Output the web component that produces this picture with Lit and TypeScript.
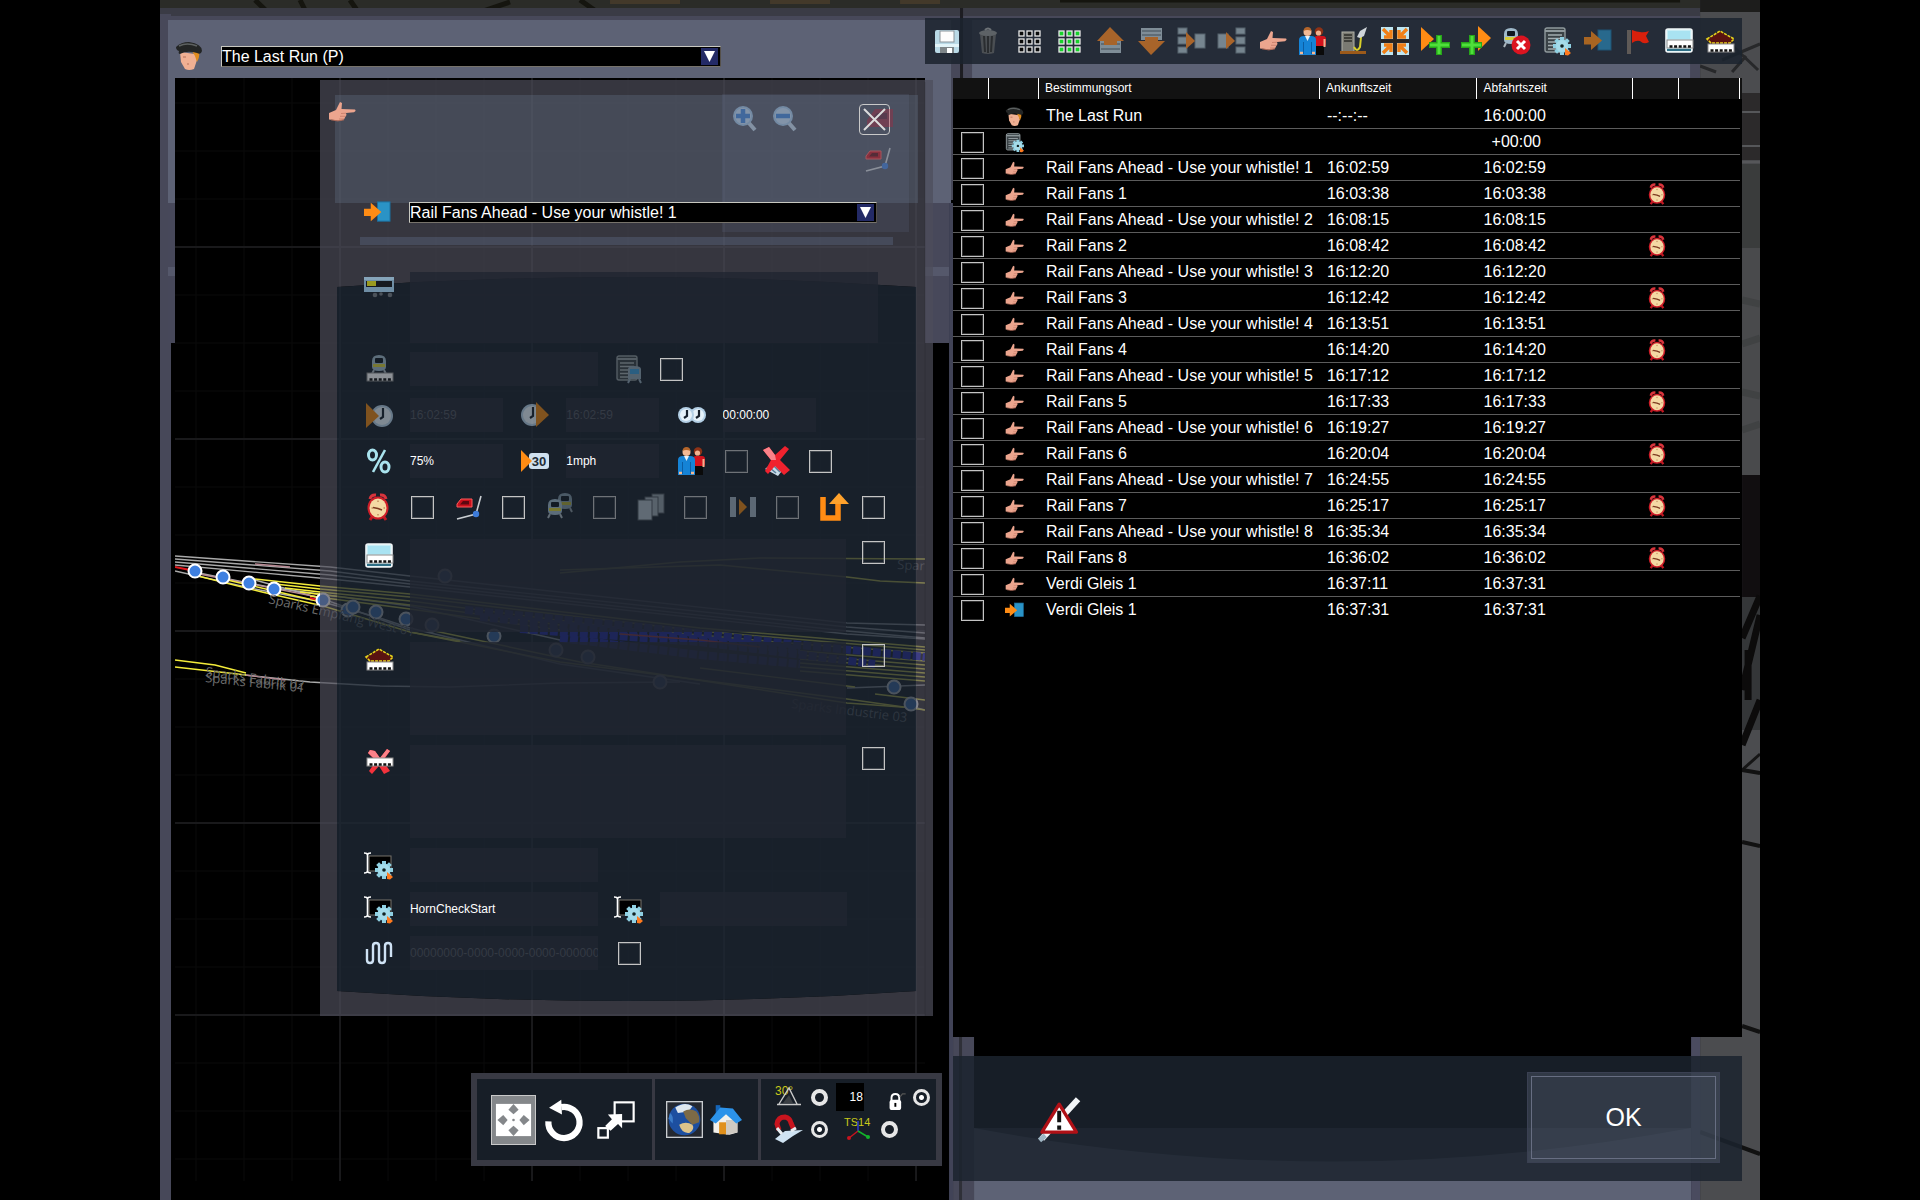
import { LitElement, html, svg, css, nothing, TemplateResult, SVGTemplateResult } from "lit";
import { customElement, property } from "lit/decorators.js";

/* ---------- icon drawings, all on a 28 x 28 grid ---------- */

const gear = svg`
  <g transform="translate(19 19)">
    <g fill="#8fd0e2">
      ${[0, 45, 90, 135].map((a) => svg`<rect x="-2" y="-9" width="4" height="18" transform="rotate(${a})"/>`)}
      <circle r="6.6"/>
    </g>
    <circle r="6" fill="#a5dcea"/>
    <circle r="1.8" fill="#122"/>
    <path d="M3 2 L9 7 L6 9.500 L3 9 Z" fill="#ff7a1e"/>
  </g>`;

const clockFace = (x: number, y: number, r: number) => svg`
  <circle cx=${x} cy=${y} r=${r} fill="#b4d0e6"/>
  <circle cx=${x} cy=${y} r=${r - 2} fill="#e6f2fa"/>
  <path d="M${x + 1} ${y - r + 3} V${y + 1} L${x - 2} ${y + 3}" stroke="#16202c" stroke-width="2.200" fill="none"/>`;

const platform = (y: number) => svg`
  <rect x="2" y=${y} width="26" height="8" fill="#fff" stroke="#8b8b8b" stroke-width="1"/>
  <path d="M4.500 ${y + 6.5} H26" stroke="#111" stroke-width="2.600" stroke-dasharray="3 1.600"/>`;

const trainFront = (x: number, y: number) => svg`
  <g transform="translate(${x} ${y})">
    <path d="M1 12 V6 Q1 0 8 0 Q15 0 15 6 V12 Q15 16 8 16 Q1 16 1 12Z" fill="#9fb9c9"/>
    <rect x="4" y="3" width="8" height="5" rx="1" fill="#10181f"/>
    <path d="M2 9 H14 V12 H2Z" fill="#d8cf3a"/>
    <path d="M3 15 L1 19 M13 15 L15 19" stroke="#aab6bd" stroke-width="2"/>
  </g>`;

const hand = svg`
  <path d="M1 15 L8 12 L12 4 L14 5 L13.500 11 L27 11.500 Q28.500 13 26 14.200 L18 15 L18.500 17 L17.500 18.500 L16 21.500 Q12 23.500 6 22 L1 21.500Z" fill="#eca58e"/>
  <path d="M13 15.500 L18 15.200 M12 18.300 L17.500 18.300 M11 21 L16 21" stroke="#c77b68" stroke-width=".8"/>
  <path d="M3 21.800 Q10 24 16 21.800" stroke="#b06a58" stroke-width="1" fill="none"/>`;

const locoRed = svg`
  <path d="M2 11 L6 6 H17 V14 H2Z" fill="#c8101c" stroke="#ff5a5a" stroke-width="1"/>
  <path d="M5 11.500 L8 8 H14 V11.500Z" fill="#5d0810"/>
  <path d="M2 26 L21 21 L26 3" stroke="#c9ced2" stroke-width="1.600" fill="none"/>
  <circle cx="21" cy="21" r="3.200" fill="#3d7bd8"/>`;

const cross = svg`
  <path d="M5 2 L10 3 L15 10 L22 1 L25 3 L18 13 L25 23 L19 26 L14 18 L7 26 L4 23 L11 13 L3 5Z" fill="#f3323c"/>
  <path d="M5 2 L10 3 L15 10 L22 1 L25 3 L17 13 L13 14 L3 5Z" fill="#fb8289"/>`;

const scriptGear = svg`
  <rect x="4" y="5" width="22" height="15" fill="#000" stroke="#77736b" stroke-width="1"/>
  <path d="M-1 2 Q2.500 2 2.500 4 V20 Q2.500 22 -1 22 M6 2 Q2.500 2 2.500 4 M2.500 20 Q2.500 22 6 22" stroke="#fff" stroke-width="1.600" fill="none"/>
  ${gear}`;

const listLines = svg`
  <rect x="2" y="1" width="20" height="24" rx="2" fill="#3a4246" stroke="#8f999c" stroke-width="1.400"/>
  <path d="M2 4 H22" stroke="#8f999c" stroke-width="2"/>
  <path d="M5 8 H19 M5 11.500 H19 M5 15 H19 M5 18.500 H19 M5 22 H19" stroke="#a3adb0" stroke-width="1.300"/>`;

const cells = (inner: string) => svg`
  ${[0, 1, 2].map((r) => [0, 1, 2].map((c) => svg`
    <rect x=${4 + c * 8} y=${4 + r * 8} width="5" height="5" fill=${inner} stroke="#e9e9e9" stroke-width="1.300"/>`))}`;

const people = svg`
  <rect x="15" y="9" width="12" height="11" rx="3" fill="#d3121c"/>
  <rect x="17" y="19" width="8" height="9" fill="#0a0a0a"/>
  <circle cx="20" cy="4.500" r="4.200" fill="#8e3216"/>
  <circle cx="19.500" cy="6" r="2.600" fill="#f0b18f"/>
  <path d="M25.500 12 V20" stroke="#f0b18f" stroke-width="2"/>
  <path d="M0 28 V13 Q0 9 5 9 H12 Q17 9 17 13 V28Z" fill="#1583d6"/>
  <path d="M4.500 15 V27 M12.500 15 V27" stroke="#0b5da3" stroke-width="1"/>
  <path d="M6 9 L8.500 14 L11 9Z" fill="#e7f2fa"/>
  <circle cx="8.500" cy="5" r="4" fill="#f3b994"/>
  <path d="M4.500 4 Q5 0 8.500 0 Q12 0 12.500 4 Q8 2 4.500 4Z" fill="#b4652a"/>
  <path d="M1 26 H4 M13 26 H16" stroke="#f3b994" stroke-width="2.400"/>`;

const lens = (sign: SVGTemplateResult) => svg`
  <path d="M17 18 L24 26" stroke="#a9bdd0" stroke-width="4"/>
  <circle cx="12" cy="12" r="10" fill="#8fb0d0"/>
  <circle cx="12" cy="12" r="8" fill="#a9c2da"/>
  ${sign}`;

const ICONS: Record<string, SVGTemplateResult> = {
  hand,
  people,
  locoRed,
  scriptGear,
  officer: svg`
    <path d="M5 10 L20 12 L22 18 L19 27 Q14 29 10 27 L6 20Z" fill="#f0b093"/>
    <path d="M17 9 L24 9 Q25 15 22 20 L20 14Z" fill="#e08c1f"/>
    <path d="M8 15 L11 15 M12 22 L14 22" stroke="#b5705a" stroke-width="1.200"/>
    <path d="M1 5 Q6 0 14 0 Q27 2 27 9 Q26 13 22 11 Q12 8 5 12 Q3 12 4 9 Q1 8 1 5Z" fill="#232525"/>
    <path d="M4 4 Q12 0 22 4" stroke="#5d6161" stroke-width="1.600" fill="none"/>`,
  exit: svg`
    <rect x="14" y="3" width="13" height="20" fill="#2a93c6" stroke="#1c6f9d" stroke-width="1"/>
    <path d="M0 10 H7 V4 L18 13.500 L7 23 V17.500 H0Z" fill="#ff8c14"/>`,
  listGear: svg`${listLines}${gear}`,
  listTrain: svg`${listLines}
    <path d="M13 24 V14 Q13 11 19 11 Q26 11 26 14 V24Z" fill="#8fa3b2"/>
    <rect x="15" y="14" width="9" height="5" fill="#3d9cd8"/>
    <path d="M15 24 L13 28 M24 24 L26 28" stroke="#8fa3b2" stroke-width="2"/>`,
  alarm: svg`
    <path d="M6 6 Q7 1.500 12 2 M16 2 Q21 1.500 22 6" stroke="#d9343c" stroke-width="3" fill="none"/>
    <path d="M8 24 L6 27 M20 24 L22 27" stroke="#c01822" stroke-width="3"/>
    <ellipse cx="14" cy="15" rx="10.500" ry="11.500" fill="#cf1d28"/>
    <ellipse cx="14" cy="15" rx="8.500" ry="9.500" fill="#f4d9a4"/>
    <path d="M9 14.500 L14 15.500 L18 17" stroke="#7d3b22" stroke-width="1.600" fill="none"/>
    <path d="M14 7.500 V9 M14 21 V22.500 M7.500 15 H9 M19.500 15 H21" stroke="#a86b3c" stroke-width="1"/>`,
  wagon: svg`
    <rect x="-1" y="5" width="30" height="15" fill="#6f8ea5"/>
    <path d="M-1 5 H29 V8 H-1Z" fill="#86a5ba"/>
    <rect x="1" y="9" width="26" height="6" fill="#161a20"/>
    <rect x="2" y="9" width="9" height="5" fill="#9a9a20"/>
    <circle cx="10" cy="23" r="2.300" fill="#4b525a"/><circle cx="16" cy="22" r="1.800" fill="#4b525a"/><circle cx="25" cy="23" r="2.300" fill="#4b525a"/>`,
  trainPlatform: svg`${trainFront(6, 0)}${platform(18)}`,
  arrive: svg`${clockFace(17, 15, 11)}<path d="M1 2 L14 15 L1 27Z" fill="#e58413"/>`,
  depart: svg`${clockFace(11, 14, 11)}<path d="M15 1 L28 14 L15 26Z" fill="#e58413"/>`,
  wait: svg`${clockFace(20, 14, 8)}${clockFace(8, 14, 8)}`,
  percent: svg`
    <ellipse cx="7.500" cy="8" rx="4" ry="5" stroke="#a9e3ee" stroke-width="3" fill="none"/>
    <ellipse cx="20" cy="20" rx="4" ry="5" stroke="#a9e3ee" stroke-width="3" fill="none"/>
    <path d="M20 3 L8 25" stroke="#a9e3ee" stroke-width="2.600"/>`,
  speed: svg`
    <rect x="8" y="6" width="20" height="16" rx="3" fill="#cfe0ee"/>
    <text x="18" y="19" font-size="13" font-weight="700" text-anchor="middle" fill="#222c36">30</text>
    <path d="M0 3 L11 14 L0 25Z" fill="#ff8c14"/>`,
  crossShoe: svg`
    <path d="M3 22 L9 17 L22 21 L16 29Z" fill="#c8dbe8"/>
    <path d="M8 21 L14 26 M12 19 L18 25" stroke="#5b7f9a" stroke-width="1.600"/>
    <path d="M1 3 L7 0 L13 8 L23 -1 L27 2 L18 13 L28 23 L22 28 L13 19 L6 27 L3 24 L9 13Z" fill="#f0222e"/>
    <path d="M1 3 L7 0 L13 8 L14 13 L9 13Z" fill="#fb8289"/>`,
  trains: svg`<g opacity=".75">${trainFront(11, 0)}</g>${trainFront(1, 6)}`,
  copies: svg`
    <rect x="15" y="1" width="12" height="19" fill="#8f9aa3" stroke="#4c545c"/>
    <rect x="8" y="4" width="13" height="19" fill="#98a3ac" stroke="#4c545c"/>
    <rect x="1" y="7" width="14" height="20" fill="#a7b4be" stroke="#4c545c"/>`,
  bars: svg`
    <rect x="1" y="4" width="6" height="20" fill="#9fb0bd"/>
    <rect x="21" y="4" width="6" height="20" fill="#9fb0bd"/>
    <path d="M10 6 L18 14 L10 22Z" fill="#e58413"/>`,
  uturn: svg`
    <path d="M3 4 V25 H18 V10" stroke="#ff8c14" stroke-width="5.500" fill="none"/>
    <path d="M9 11 L19 0 L29 11Z" fill="#ffa22c"/>`,
  platform: svg`
    <rect x="1" y="2" width="26" height="23" rx="2" fill="#c9eef6" stroke="#f2f7f9" stroke-width="1.600"/>
    <rect x="3" y="4" width="22" height="8" fill="#a9e3f2"/>
    <path d="M2 23 H26" stroke="#2e6f86" stroke-width="2"/>
    ${platform(13)}`,
  station: svg`
    <path d="M1 13 L14 4 L28 13 L24 17 H5Z" fill="#5a1210"/>
    <path d="M1 12 L14 4 L28 12 L24 16 H5Z" fill="none" stroke="#e8d21a" stroke-width="1.600" stroke-dasharray="3 1"/>
    ${platform(17)}`,
  stationX: svg`${cross}${platform(10)}`,
  wave: svg`
    <path d="M2 10 V21 Q2 24 5 24 Q8 24 8 21 V7 Q8 4 11 4 Q14 4 14 7 V21 Q14 24 17 24 Q20 24 20 21 V7 Q20 4 23 4 Q26 4 26 7 V18" stroke="#cfe2f4" stroke-width="2.400" fill="none"/>`,
  floppy: svg`
    <rect x="2" y="3" width="24" height="23" rx="2" fill="#b9d9e6"/>
    <rect x="7" y="4" width="14" height="11" fill="#fdfdfd" stroke="#8a9399" stroke-width="1"/>
    <rect x="2" y="17" width="24" height="3" fill="#e2f3f8"/>
    <rect x="7" y="20" width="14" height="6" fill="#7f8689"/>
    <rect x="14" y="21" width="5" height="5" fill="#fff"/>`,
  trash: svg`
    <path d="M6 7 H22 L20 26 Q14 28 8 26Z" fill="#4b4f53"/>
    <path d="M10 9 L11 25 M14 9 V26 M18 9 L17 25" stroke="#2a2d30" stroke-width="2"/>
    <ellipse cx="14" cy="6" rx="9" ry="3" fill="#5d6266"/>
    <path d="M11 3 Q14 0 17 3" stroke="#6d7276" stroke-width="2" fill="none"/>`,
  grid: cells("#0b0b0b"),
  gridOn: cells("#16d22a"),
  up: svg`
    <rect x="4" y="14" width="21" height="12" fill="#7f8d97"/>
    <path d="M5 17 H24 M5 22 H24" stroke="#56626c" stroke-width="1.300"/>
    <path d="M14 0 L28 14 H21 V18 H8 V14 H1Z" fill="#a8642a"/>`,
  down: svg`
    <rect x="4" y="1" width="21" height="12" fill="#7f8d97"/>
    <path d="M5 4 H24 M5 8 H24" stroke="#56626c" stroke-width="1.300"/>
    <path d="M14 28 L28 14 H21 V10 H8 V14 H1Z" fill="#a8642a"/>`,
  merge: svg`
    <g fill="#76858f" stroke="#56636d">
      <rect x="1" y="1" width="9" height="6"/><rect x="1" y="10" width="9" height="7"/><rect x="1" y="20" width="9" height="6"/>
      <rect x="18" y="7" width="10" height="14"/>
    </g>
    <path d="M9 5 L18 14 L9 22Z" fill="#a8642a"/>`,
  split: svg`
    <g fill="#76858f" stroke="#56636d">
      <rect x="0" y="7" width="10" height="14"/>
      <rect x="18" y="1" width="9" height="6"/><rect x="18" y="10" width="9" height="7"/><rect x="18" y="20" width="9" height="6"/>
    </g>
    <path d="M8 5 L17 14 L8 22Z" fill="#a8642a"/>`,
  fuel: svg`
    <rect x="2" y="5" width="12" height="20" fill="#7a7a72" stroke="#b2b2a8"/>
    <path d="M4 8 H12 M4 11 H12 M4 14 H12" stroke="#2c2c28" stroke-width="1.600"/>
    <path d="M14 20 Q17 26 20 20 L21 10" stroke="#d8cf2a" stroke-width="2" fill="none"/>
    <path d="M17 10 L20 4 L27 0 L24 9 L20 11Z" fill="#cfd5d9"/>
    <rect x="0" y="24" width="26" height="3" fill="#9c5a1a"/>`,
  expand: svg`
    <g fill="#bfe6f2"><rect x="0" y="0" width="12" height="12"/><rect x="16" y="0" width="12" height="12"/><rect x="0" y="16" width="12" height="12"/><rect x="16" y="16" width="12" height="12"/></g>
    <g stroke="#f07f16" stroke-width="3.400" fill="none">
      <path d="M2 2 L10 10 M10 3 V10 H3"/><path d="M26 2 L18 10 M18 3 V10 H25"/>
      <path d="M2 26 L10 18 M3 18 H10 V25"/><path d="M26 26 L18 18 M25 18 H18 V25"/>
    </g>
    <path d="M14 0 V28 M0 14 H28" stroke="#2a2420" stroke-width="2.600"/>`,
  addAfter: svg`
    <path d="M0 0 L13 12 L0 24Z" fill="#ff8c14"/>
    <path d="M18 8 V28 M8 18 H29" stroke="#27a51a" stroke-width="6"/>
    <path d="M18 9 V27 M9 18 H28" stroke="#4ee03a" stroke-width="3"/>`,
  addBefore: svg`
    <path d="M16 -1 L29 11 L16 24Z" fill="#ff8c14"/>
    <path d="M10 8 V28 M-1 18 H20" stroke="#27a51a" stroke-width="6"/>
    <path d="M10 9 V27 M0 18 H19" stroke="#4ee03a" stroke-width="3"/>`,
  trainRemove: svg`${trainFront(0, 1)}
    <circle cx="18" cy="18" r="9.500" fill="#dc1420"/>
    <path d="M14 14 L22 22 M22 14 L14 22" stroke="#fff" stroke-width="3"/>`,
  flag: svg`
    <path d="M5 3 V27" stroke="#5f5a57" stroke-width="4"/>
    <path d="M8 3 Q13 5 16 5 Q20 6 25 4 L22 9 L25 15 Q20 18 16 14 Q12 13 8 16Z" fill="#d8200c"/>`,
  zoomIn: lens(svg`<path d="M12 5 V19 M5 12 H19" stroke="#3c78c4" stroke-width="4.500"/>`),
  zoomOut: lens(svg`<path d="M5 12 H19" stroke="#3c78c4" stroke-width="4.500"/>`),
  loco: svg`<path d="M2 20 V15 L10 4 H28 V22 H2Z" fill="#b5223c"/><path d="M6 14 L12 8 H22 V14Z" fill="#70142c"/>`,
  move: svg`
    <rect x="2" y="3" width="24" height="22" fill="#fff"/>
    <g fill="#84878a"><path d="M14 3 L17.500 7 L14 10 L10.500 7Z"/><path d="M14 25 L17.500 21 L14 18 L10.500 21Z"/><path d="M3 14 L7 10.500 L10 14 L7 17.500Z"/><path d="M25 14 L21 10.500 L18 14 L21 17.500Z"/><circle cx="14" cy="14" r=".9"/></g>`,
  rotate: svg`
    <path d="M2.500 15 A11.500 11.500 0 1 0 12 4.500" stroke="#fff" stroke-width="4.600" fill="none"/>
    <path d="M3 5 L12 -1 L12.500 10Z" fill="#fff"/>`,
  scale: svg`
    <rect x="13" y="1" width="14" height="14" fill="none" stroke="#fff" stroke-width="1.600"/>
    <rect x="1" y="20" width="7" height="7" fill="none" stroke="#fff" stroke-width="1.600"/>
    <path d="M8 10 L18.500 9.500 V20 L15.500 17 L10 22 L6 18.500 L11 13.500Z" fill="#fff"/>`,
  globe: svg`
    <rect x=".5" y=".5" width="27" height="27" fill="#242830" stroke="#c9ccd0"/>
    <circle cx="14" cy="14" r="12" fill="#1d4fa0"/>
    <path d="M7 5 Q14 0 20 4 L17 8 L9 9Z" fill="#dfe8ef"/>
    <path d="M13 8 Q18 5 23 8 Q26 12 25 16 L20 18 L15 13Z" fill="#7c6a46"/>
    <path d="M10 18 Q15 15 20 18 Q22 21 18 24 Q12 25 10 18Z" fill="#dcc38a"/>
    <path d="M3 9 Q6 11 5 17 Q3 15 2 13Z" fill="#3b7cc8"/>`,
  house: svg`
    <rect x="5" y="1" width="4" height="8" fill="#1565b8"/>
    <path d="M3 14 L13 5 L24 14 V25 L17 27 L3 25Z" fill="#f3f1ec"/>
    <path d="M14 14 L24 14 V25 L14 27Z" fill="#cfcac2"/>
    <path d="M8 16 H14 V26.500 H8Z" fill="#e0901c"/>
    <path d="M0 14 L9 3 L20 4 L28 14 L23 17 L14 9 L5 17Z" fill="#2c93ea"/>`,
  angle: svg`
    <text x="0" y="12" font-size="12" fill="#c9c91a">30°</text>
    <path d="M4 21 L14 5 L22 21 M2 21.500 H26" stroke="#c9c9c9" stroke-width="1.400" fill="none"/>
    <path d="M8 20 L14 12 L18 20Z" fill="#3b3f44"/>`,
  magnet: svg`
    <path d="M0 24 L10 16 L28 15 L18 21 L8 28Z" fill="#cfe3f2"/>
    <path d="M4 15 L2 9 Q3 2 10 2 Q15 3 16 8 L19 15" stroke="#c8141e" stroke-width="5" fill="none"/>
    <path d="M2 13 L7 19 M16 16 L21 13" stroke="#e8eef2" stroke-width="3"/>`,
  axes: svg`
    <text x="-1" y="11" font-size="11" fill="#c9c91a">TS14</text>
    <path d="M13 16 V6" stroke="#2b3bd0" stroke-width="1.500"/>
    <path d="M13 16 L4 23" stroke="#c8141e" stroke-width="1.500"/><circle cx="4" cy="23" r="2" fill="#c8141e"/>
    <path d="M13 16 L23 22" stroke="#12b32a" stroke-width="1.500"/><circle cx="23" cy="22" r="2" fill="#12b32a"/>`,
  lock: svg`
    <path d="M7 15 V9 Q7 3 13 3 Q19 3 19 9 V15" stroke="#fff" stroke-width="3" fill="none"/>
    <rect x="4" y="12" width="18" height="16" rx="4" fill="#fff"/>
    <path d="M13 17 V23" stroke="#000" stroke-width="3"/>
    <path d="M20 8 L24 3 H29" stroke="#555" stroke-width="2" fill="none"/>`,
  warning: svg`
    <path d="M3 26 L25 2" stroke="#f2f5f7" stroke-width="3.600"/>
    <path d="M1.500 27 L5 24" stroke="#9fb6c4" stroke-width="3"/>
    <path d="M13.500 5 L24 22 H3Z" fill="#fff" stroke="#b01016" stroke-width="2" stroke-linejoin="round"/>
    <path d="M13.500 9 V16 M13.500 18 V20.500" stroke="#111" stroke-width="2.400"/>`,
};

@customElement("rail-icon")
export class RailIcon extends LitElement {
  @property() name = "";
  static styles = css`
    :host { display: inline-block; width: 28px; height: 28px; flex: none; }
    .drawing { display: block; width: 100%; height: 100%; overflow: visible; font-family: "Liberation Sans", Arial, sans-serif; }
  `;
  render() {
    return html`<svg class="drawing" viewBox="0 0 28 28" aria-hidden="true">${ICONS[this.name] ?? nothing}</svg>`;
  }
}

/* ---------- data ---------- */

interface Stop { icon: string; name: string; arrive: string; depart: string; alarm?: boolean; select?: boolean; }

const fans: [string, string][] = [
  ["16:02:59", "16:03:38"], ["16:08:15", "16:08:42"], ["16:12:20", "16:12:42"], ["16:13:51", "16:14:20"],
  ["16:17:12", "16:17:33"], ["16:19:27", "16:20:04"], ["16:24:55", "16:25:17"], ["16:35:34", "16:36:02"],
];

const STOPS: Stop[] = [
  { icon: "officer", name: "The Last Run", arrive: "--:--:--", depart: "16:00:00" },
  { icon: "listGear", name: "", arrive: "", depart: "+00:00", select: true },
  ...fans.flatMap(([ahead, at], i): Stop[] => [
    { icon: "hand", name: `Rail Fans Ahead - Use your whistle! ${i + 1}`, arrive: ahead, depart: ahead, select: true },
    { icon: "hand", name: `Rail Fans ${i + 1}`, arrive: at, depart: at, alarm: true, select: true },
  ]),
  { icon: "hand", name: "Verdi Gleis 1", arrive: "16:37:11", depart: "16:37:31", select: true },
  { icon: "exit", name: "Verdi Gleis 1", arrive: "16:37:31", depart: "16:37:31", select: true },
];

const TOOLS: [string, string, boolean?][] = [
  ["floppy", "Speichern"], ["trash", "Löschen"], ["grid", "Auswahl aufheben"], ["gridOn", "Alles auswählen"],
  ["up", "Nach oben"], ["down", "Nach unten"], ["merge", "Zusammenführen"], ["split", "Aufteilen"],
  ["hand", "Wegpunkt"], ["people", "Fahrgäste"], ["fuel", "Tanken"], ["expand", "Kuppeln"],
  ["addAfter", "Danach einfügen"], ["addBefore", "Davor einfügen"], ["trainRemove", "Zug entfernen"],
  ["listGear", "Anweisung"], ["exit", "Ziel", true], ["flag", "Markierung"], ["platform", "Bahnsteig"], ["station", "Bahnhof"],
];

/* ---------- the game scene behind the windows ---------- */

const scene = svg`
  <rect width="1600" height="1200" fill="#000"/>
  <rect width="1600" height="22" fill="#2b2c28"/>
  <g stroke="#15150f" stroke-width="5" fill="none">
    <path d="M95 0 L118 22 M140 0 L150 20 M190 0 L205 22 M320 12 L350 2 M420 0 L440 14 M900 0 H1520"/>
  </g>
  <g fill="#43392a"><rect x="450" y="0" width="70" height="4"/><rect x="610" y="0" width="60" height="4"/><rect x="740" y="0" width="40" height="4"/></g>
  <g>
    <rect x="1540" y="0" width="60" height="1200" fill="#4b4c4f"/>
    <rect x="1540" y="0" width="60" height="12" fill="#1d1d1c"/>
    <path d="M1540 66 L1556 72 M1560 34 L1598 70 M1562 60 L1600 44 M1572 72 L1586 56" stroke="#27282a" stroke-width="3"/>
    <rect x="1582" y="93" width="18" height="67" fill="#2c2a2b"/>
    <path d="M1582 112 H1600 M1582 146 H1600 M1582 162 H1600" stroke="#56575a" stroke-width="2"/>
    <rect x="1582" y="164" width="18" height="84" fill="#3a3c3c"/>
    <rect x="1582" y="248" width="18" height="227" fill="#494a4c"/>
    <path d="M1582 300 L1600 304 M1582 344 L1600 338 M1582 392 L1600 396 M1582 430 L1600 424" stroke="#404243" stroke-width="7"/>
    <rect x="1582" y="475" width="18" height="122" fill="#110e10"/>
    <rect x="1582" y="597" width="18" height="133" fill="#343638"/>
    <path d="M1600 596 L1582 638 M1600 615 L1582 690 M1588 650 V700 M1600 700 L1582 745" stroke="#0c0b0b" stroke-width="7"/>
    <path d="M1582 770 L1600 754" stroke="#151515" stroke-width="3"/>
    <path d="M1582 770 L1600 773 M1582 842 L1600 846 M1582 1026 L1600 1032 M1540 1132 L1600 1154" stroke="#111" stroke-width="4"/>
  </g>
  <g>
    <rect x="0" y="14" width="1540" height="186" fill="#474859"/>
    <rect x="0" y="8" width="1540" height="8" fill="#3a3b45"/>
    <rect x="0" y="14" width="11" height="1186" fill="#474859"/>
    <rect x="8" y="20" width="783" height="183" fill="#5d6275"/>
    <rect x="8" y="203" width="781" height="140" fill="#47485a"/>
    <rect x="8" y="267" width="781" height="9" fill="#55586b"/>
    <rect x="789" y="203" width="4" height="997" fill="#414357"/>
    <rect x="812" y="20" width="718" height="180" fill="#5d6275"/>
    <rect x="800" y="8" width="3" height="72" fill="#1d1d22"/>
    <rect x="793" y="1030" width="21" height="170" fill="#474859"/>
    <rect x="799" y="1030" width="3" height="170" fill="#2f3038"/>
    <rect x="1531" y="1030" width="9" height="170" fill="#4a4b5f"/>
    <path d="M814 1128 H1531 V1200 H814Z" fill="#5d6275"/>
    <path d="M814 1128 H1531 Q1172 1195 814 1128Z" fill="#30313d"/>
  </g>`;

/* ---------- 2D track map ---------- */

const range = (from: number, to: number, step: number) =>
  Array.from({ length: Math.floor((to - from) / step) + 1 }, (_, i) => from + i * step);

const PINS: [number, number][] = [
  [195, 571], [223, 577], [249, 583], [274, 589], [323, 600], [348, 610], [353, 607], [376, 612], [406, 619],
  [432, 625], [494, 636], [445, 576], [556, 650], [588, 657], [660, 682], [894, 687], [911, 704],
];

const trackMap = svg`
  <rect x="175" y="78" width="750" height="1103" fill="#000"/>
  <g stroke="#0a0a0b">
    ${range(196, 916, 48).map((x) => svg`<path d="M${x} 78 V1181"/>`)}
    ${range(103, 1160, 48).map((y) => svg`<path d="M175 ${y} H925"/>`)}
  </g>
  <g stroke="#19191b" stroke-width="2">
    ${range(340, 916, 192).map((x) => svg`<path d="M${x} 78 V1181"/>`)}
    ${range(247, 1020, 192).map((y) => svg`<path d="M175 ${y} H925"/>`)}
  </g>
  <g fill="none" stroke-width="1.400">
    <g stroke="#a9a9a9">
      <path d="M175 556 L330 567 L410 576 L847 623 L925 625"/>
      <path d="M175 559 L330 571 L410 581 L847 627 L925 633"/>
      <path d="M175 562 L330 575 L410 584 L847 631 L925 638"/>
      <path d="M175 565 L330 579 L410 587 L847 634 L925 639"/>
      <path d="M175 571 L260 590 L323 602 L380 618 L410 628 L560 664 L700 684"/>
      <path d="M194 572 L274 588 L410 606 L560 640"/>
      <path d="M255 580 L323 599 L410 630"/>
      <path d="M245 675 L310 682 L380 686 L450 687 L560 683 L680 682"/>
      <path d="M847 688 L925 685 M905 705 L925 710"/>
    </g>
    <g stroke="#b98a94"><path d="M194 573 L323 598 M255 564 L290 567 M245 675 L285 680"/></g>
    <g stroke="#f4ec3a">
      <path d="M194 575 L262 592 L323 606 L410 632 L460 641"/>
      <path d="M223 579 L300 597 L330 604"/>
      <path d="M255 579 L320 586 L410 594 L700 628 L925 647"/>
      <path d="M275 584 L320 589 L410 597 L700 631 L925 650"/>
      <path d="M285 588 L320 592 L410 601 L620 628 L800 644 L925 653"/>
      <path d="M300 592 L410 605 L560 625"/>
      <path d="M310 596 L410 609 L560 630"/>
      <path d="M410 632 L560 662 L847 699 L925 710"/>
      <path d="M430 630 L580 662 L847 703 L915 708"/>
      ${range(661, 683, 4).map((y) => svg`<path d="M800 ${y - 10} L925 ${y}"/>`)}
      <path d="M700 668 L855 687 M875 694 L925 700"/>
      <path d="M560 573 L680 562 L760 558 L925 559"/>
      <path d="M560 570 L720 565 L847 577 L880 581 L925 583"/>
      <path d="M175 660 L215 665 L246 673 M175 667 L246 675"/>
    </g>
    <path d="M175 567 L190 570 M310 598 L323 601" stroke="#e0161c" stroke-width="2"/>
    <g stroke="#1a1ae0" stroke-width="8" stroke-dasharray="8 2">
      <path d="M465 610 L640 627 L800 645 L925 657"/>
      <path d="M480 617 L640 633 L800 650"/>
      <path d="M520 629 L700 642 L875 664"/>
      <path d="M560 638 L700 655 L800 664"/>
    </g>
    <path d="M620 634 L700 640 L760 647" stroke="#d03030"/>
  </g>
  <g fill="#3f80e0" stroke="#fff" stroke-width="2">
    ${PINS.map(([x, y]) => svg`<circle cx=${x} cy=${y} r="6.500"/>`)}
  </g>
  <g class="map-label">
    <text transform="translate(268 603) rotate(13)">Sparks Empfang West 01</text>
    <text transform="translate(205 676) rotate(8)">Sparks Fabrik 02</text>
    <text transform="translate(205 682) rotate(6)">Sparks Fabrik 01</text>
    <text transform="translate(791 708) rotate(7)">Sparks Industrie 03</text>
    <text transform="translate(897 569) rotate(3)">Spar</text>
  </g>`;

const panelBack = svg`
  <path fill-rule="evenodd" fill="rgba(77,77,90,.7)" d="M0 0 H613 V936 H0Z M17 207 Q306 187 596 207 V911 Q306 931 17 911Z"/>
  <path fill="rgba(30,40,52,.8)" d="M17 207 Q306 187 596 207 V911 Q306 931 17 911Z"/>
  <rect x="15" y="15" width="583" height="108" fill="rgba(100,115,135,.34)"/>
  <rect x="402" y="14" width="187" height="138" fill="rgba(110,125,160,.14)"/>
  <rect x="40" y="157" width="533" height="8" fill="rgba(100,115,145,.34)"/>
  <path d="M605 2 V936" stroke="rgba(0,0,0,.12)"/>`;

/* ---------- page ---------- */

@customElement("app-root")
export class AppRoot extends LitElement {
  static styles = css`
    :host { display: block; background: #000; color: #fff; font: 16px/20px "Liberation Sans", Arial, sans-serif; }
    * { box-sizing: border-box; }
    button, input, select, textarea { font: inherit; color: inherit; margin: 0; border-radius: 0; }
    button { background: none; border: 0; padding: 0; display: grid; place-items: center; }

    .stage { position: relative; display: grid; grid-template-columns: 793fr 807fr; min-height: 100vh; width: min(100%, 133.34vh); margin: 0 auto; }
    .scene { position: absolute; inset: 0; width: 100%; height: 100%; }

    /* left column */
    .editor { position: relative; display: flex; flex-direction: column; padding: 0 28px 19px 15px; min-width: 0; }
    .service { display: flex; align-items: center; gap: 18px; height: 78px; padding: 34px 204px 0 0; }
    .combo { position: relative; display: flex; flex: 1; min-width: 0; height: 21px; background: #000; border: 1px solid #777; border-color: #c8c8c0 #55504a #77736b #c8c8c0; }
    .combo select { appearance: none; flex: 1; min-width: 0; background: none; border: 0; padding: 0; height: 19px; line-height: 19px; outline: none; }
    .combo .arrow { display: grid; place-items: center; width: 17px; height: 17px; margin: 1px 2px; background: #232a66; pointer-events: none; }
    .combo .arrow svg { width: 13px; height: 13px; }

    .map { position: relative; flex: 1; }
    .tracks { position: absolute; inset: 0; width: 100%; height: 100%; }
    .map-label text { font: 13px "Open Sans", "Noto Sans", sans-serif; fill: #6d6d6d; }

    /* stop detail window over the map */
    .panel { position: absolute; left: 145px; right: -8px; top: 2px; padding: 24px 48px 46px 44px; }
    .panel-back { position: absolute; inset: 0; width: 100%; height: 100%; }
    .panel > :not(.panel-back) { position: relative; }
    .panel-head { display: flex; align-items: flex-start; height: 98px; margin: 0 -5px 0 -36px; }
    .panel-head > rail-icon { margin-top: -6px; }
    .lenses { display: flex; gap: 12px; margin-left: auto; opacity: .6; }
    .corner { display: grid; gap: 10px; margin-left: 60px; width: 31px; }
    .close { position: relative; width: 31px; height: 31px; border: 1px solid #c9c9c9; border-radius: 4px; }
    .close svg { position: relative; width: 25px; height: 25px; }
    .close rail-icon { position: absolute; left: 5px; top: 0; opacity: .35; }
    .faint { opacity: .5; margin-left: 5px; }
    .destination { display: flex; align-items: center; gap: 15px; height: 21px; margin-right: 8px; }
    .destination rail-icon { width: 27px; height: 27px; margin-right: 3px; }

    .fields { display: flex; flex-direction: column; gap: 10px; margin-top: 49px; }
    .tight { display: flex; flex-direction: column; gap: 12px; padding-bottom: 5px; margin-top: -1px; }
    .row { display: flex; align-items: center; gap: 16px; }
    .row.top { align-items: flex-start; }
    .row.top .tick { margin-top: 2px; }
    .row.top rail-icon { margin-top: 3px; }
    .row.top.wagons rail-icon { margin-top: 0; }
    .row rail-icon { width: 30px; height: 28px; }
    .thirds { display: grid; grid-template-columns: 30% 30% 40%; }
    .flags { display: grid; grid-template-columns: repeat(5, 91fr) 65fr; height: 34px; }
    .flags label { display: flex; align-items: center; gap: 19px; }
    .flags label:last-child { gap: 14px; }
    .box { background: rgba(32,38,49,.8); border: 0; padding: 0; height: 34px; font-size: 12px; outline: none; resize: none; display: block; }
    .box:disabled { color: #343a44; }
    .short { width: 93px; flex: none; }
    .half { width: 36%; flex: none; }
    .area { flex: 1; height: 93px; }
    .wagons { margin-right: 7px; }
    .wagons .area { height: 71px; }
    .row.people { gap: 18px; }
    .pair { display: flex; align-items: center; gap: 18px; margin-left: -5px; }
    .guid { gap: 20px; }
    .guid rail-icon { margin-right: -4px; }
    .dim { opacity: .5; }

    .tick { appearance: none; flex: none; width: 23px; height: 23px; border: 1px solid #c4c4c4; outline: 1px solid rgba(196,196,196,.25); outline-offset: -2px; background: transparent; }
    .tick:disabled { opacity: .5; }

    /* gizmo bar */
    .gizmos { position: absolute; left: 296px; right: -17px; bottom: 15px; height: 93px; display: grid; grid-template-columns: 175fr 103fr 175fr; gap: 3px; border: 6px solid #383943; background: #383943; }
    .gizmos > div { background: #171e27; display: flex; align-items: center; min-width: 0; }
    .transform { gap: 9px; padding-left: 14px; }
    .transform rail-icon { width: 38px; height: 38px; }
    .transform button:last-child { margin-left: 5px; }
    .gizmos .active { width: 45px; height: 50px; background: #84878a; border: 1px solid #c9c9c9; }
    .gizmos .active rail-icon { width: 41px; height: 42px; }
    .places { gap: 7px; padding-left: 11px; }
    .places rail-icon { width: 37px; height: 37px; }
    .places button + button rail-icon { width: 32px; height: 32px; }
    .gizmos .snap { flex-direction: column; align-items: flex-start; justify-content: flex-start; gap: 4px; padding: 4px 0 0 14px; }
    .line { display: flex; align-items: center; gap: 8px; height: 28px; }
    .line .grow { margin-left: 9px; }
    .line .lock { width: 18px; height: 20px; margin: 8px 0 0 15px; }
    .ring { appearance: none; flex: none; width: 17px; height: 17px; border: 4px solid #e6e6e6; border-radius: 50%; background: #171e27; }
    .ring:checked { border-width: 3px; background: radial-gradient(circle, #fff 0 2px, #171e27 3px); }
    .amount { width: 28px; height: 28px; border: 0; padding: 0 1px; background: #000; font-size: 12px; text-align: right; }

    /* right column */
    .timetable { position: relative; display: flex; flex-direction: column; margin-right: 18px; min-width: 0; padding: 18px 0 19px; }
    .tools { display: flex; height: 46px; margin-left: -28px; padding: 0 2px; background: rgba(27,35,46,.85); }
    .tools button { flex: 1; }
    .disabled { opacity: .6; }
    .list { flex: 1; margin: 14px 0 19px; padding-right: 2px; background: linear-gradient(#121212 21px, #000 21px); }
    table { width: 100%; border-collapse: separate; border-spacing: 0; table-layout: fixed; }
    th { height: 21px; padding: 0 0 0 6px; border-right: 1px solid #fff; font-weight: 400; font-size: 12px; line-height: 21px; text-align: left; }
    td { height: 26px; padding: 1px 0 0 7px; line-height: 24px; white-space: nowrap; border-bottom: 1px solid #5c5c5c; }
    th:nth-child(5) { padding-left: 7px; }
    tbody tr:first-child td { height: 30px; padding-top: 5px; }
    tbody tr:last-child td { border-bottom-color: transparent; }
    td:first-child { padding-left: 8px; }
    td .tick { display: block; height: 21px; }
    td.mark { padding-left: 16px; }
    td.mark rail-icon { display: block; width: 19px; height: 21px; }
    td.bell { padding: 0 0 0 13px; }
    td.bell rail-icon { display: block; width: 22px; height: 22px; }
    td.offset { padding-left: 15px; }
    .c1 { width: 36px; } .c2 { width: 50px; } .c3 { width: 35.7%; } .c4 { width: 19.9%; } .c5 { width: 19.9%; } .c6 { width: 46px; }

    .footer { display: flex; align-items: center; justify-content: space-between; height: 125px; padding: 0 22px 0 84px; background: rgba(27,35,46,.85); }
    .footer > button:first-child rail-icon { width: 46px; height: 46px; }
    .ok { width: 193px; height: 91px; margin-bottom: 3px; padding: 3px; background: rgba(120,130,150,.28); border: 1px solid #3a4052; }
    .ok span { display: grid; place-items: center; width: 100%; height: 100%; border: 1px solid #676e82; font-size: 25px; }
  `;

  private tick(label: string, off = false): TemplateResult {
    return html`<input class="tick" type="checkbox" aria-label=${label} ?disabled=${off}>`;
  }

  private combo(label: string, value: string): TemplateResult {
    return html`<div class="combo">
      <select aria-label=${label}><option>${value}</option></select>
      <span class="arrow"><svg viewBox="0 0 13 13" aria-hidden="true"><path d="M1 1 H12 L6.500 12Z" fill="#fff"/></svg></span>
    </div>`;
  }

  private flag(icon: string, label: string, off = false): TemplateResult {
    return html`<label><rail-icon class=${off ? "dim" : ""} name=${icon}></rail-icon>${this.tick(label, off)}</label>`;
  }

  private note(icon: string, label: string): TemplateResult {
    return html`<div class="row top">
      <rail-icon name=${icon}></rail-icon>
      <textarea class="box area" aria-label=${label}></textarea>
      ${this.tick(label)}
    </div>`;
  }

  private panel(): TemplateResult {
    return html`<section class="panel">
      <svg class="panel-back" viewBox="0 0 613 936" preserveAspectRatio="none" aria-hidden="true">${panelBack}</svg>
      <div class="panel-head">
        <rail-icon name="hand"></rail-icon>
        <div class="lenses">
          <button aria-label="Vergrößern"><rail-icon name="zoomIn"></rail-icon></button>
          <button aria-label="Verkleinern"><rail-icon name="zoomOut"></rail-icon></button>
        </div>
        <div class="corner">
          <button class="close" aria-label="Schließen">
            <rail-icon name="loco"></rail-icon>
            <svg viewBox="0 0 25 25" aria-hidden="true"><path d="M2 2 L23 23 M23 2 L2 23" stroke="#dcdcdc" stroke-width="2"/></svg>
          </button>
          <rail-icon class="faint" name="locoRed"></rail-icon>
        </div>
      </div>
      <div class="destination"><rail-icon name="exit"></rail-icon>${this.combo("Bestimmungsort", "Rail Fans Ahead - Use your whistle! 1")}</div>
      <div class="fields">
        <div class="row top wagons">
          <rail-icon name="wagon"></rail-icon>
          <textarea class="box area" aria-label="Fahrzeuge"></textarea>
        </div>
        <div class="tight">
          <div class="row">
            <rail-icon class="dim" name="trainPlatform"></rail-icon>
            <input class="box half" aria-label="Zug">
            <rail-icon class="dim" name="listTrain"></rail-icon>
            ${this.tick("Zugliste")}
          </div>
          <div class="thirds">
            <div class="row"><rail-icon class="dim" name="arrive"></rail-icon><input class="box short" aria-label="Ankunft" value="16:02:59" disabled></div>
            <div class="row"><rail-icon class="dim" name="depart"></rail-icon><input class="box short" aria-label="Abfahrt" value="16:02:59" disabled></div>
            <div class="row"><rail-icon name="wait"></rail-icon><input class="box short" aria-label="Dauer" value="00:00:00"></div>
          </div>
          <div class="thirds">
            <div class="row"><rail-icon name="percent"></rail-icon><input class="box short" aria-label="Leistung" value="75%"></div>
            <div class="row"><rail-icon name="speed"></rail-icon><input class="box short" aria-label="Mindesttempo" value="1mph"></div>
            <div class="row people">
              <rail-icon name="people"></rail-icon>${this.tick("Fahrgäste", true)}
              <label class="pair"><rail-icon name="crossShoe"></rail-icon>${this.tick("Nicht kuppeln")}</label>
            </div>
          </div>
          <div class="flags">
            ${this.flag("alarm", "Zeitgebunden")}
            ${this.flag("locoRed", "Rangieren")}
            ${this.flag("trains", "Züge", true)}
            ${this.flag("copies", "Kopien", true)}
            ${this.flag("bars", "Durchfahrt", true)}
            ${this.flag("uturn", "Wenden")}
          </div>
        </div>
        ${this.note("platform", "Bahnsteigtext")}
        ${this.note("station", "Bahnhofstext")}
        ${this.note("stationX", "Fehlertext")}
        <div class="row"><rail-icon name="scriptGear"></rail-icon><input class="box half" aria-label="Skript"></div>
        <div class="row">
          <rail-icon name="scriptGear"></rail-icon><input class="box half" aria-label="Startereignis" value="HornCheckStart">
          <rail-icon name="scriptGear"></rail-icon><input class="box half" aria-label="Endereignis">
        </div>
        <div class="row guid">
          <rail-icon name="wave"></rail-icon><input class="box half" aria-label="Kennung" value="00000000-0000-0000-0000-000000000000" disabled>
          ${this.tick("Kennung verwenden")}
        </div>
      </div>
    </section>`;
  }

  private gizmos(): TemplateResult {
    return html`<div class="gizmos">
      <div class="transform">
        <button class="active" aria-label="Verschieben"><rail-icon name="move"></rail-icon></button>
        <button aria-label="Drehen"><rail-icon name="rotate"></rail-icon></button>
        <button aria-label="Skalieren"><rail-icon name="scale"></rail-icon></button>
      </div>
      <div class="places">
        <button aria-label="Welt"><rail-icon name="globe"></rail-icon></button>
        <button aria-label="Start"><rail-icon name="house"></rail-icon></button>
      </div>
      <div class="snap">
        <div class="line">
          <rail-icon name="angle"></rail-icon><input class="ring" type="checkbox" aria-label="Winkelraster">
          <input class="amount" aria-label="Winkel" value="18">
          <rail-icon class="lock" name="lock"></rail-icon><input class="ring" type="checkbox" aria-label="Sperren" checked>
        </div>
        <div class="line">
          <rail-icon name="magnet"></rail-icon><input class="ring" type="checkbox" aria-label="Einrasten" checked>
          <rail-icon class="grow" name="axes"></rail-icon><input class="ring" type="checkbox" aria-label="Achsen">
        </div>
      </div>
    </div>`;
  }

  private stopRow(s: Stop): TemplateResult {
    return html`<tr>
      <td>${s.select ? this.tick(s.name || "Anweisung") : nothing}</td>
      <td class="mark"><rail-icon name=${s.icon}></rail-icon></td>
      <td>${s.name}</td>
      <td>${s.arrive}</td>
      <td class=${s.depart.startsWith("+") ? "offset" : ""}>${s.depart}</td>
      <td class="bell">${s.alarm ? html`<rail-icon name="alarm"></rail-icon>` : nothing}</td>
      <td></td>
    </tr>`;
  }

  render() {
    return html`<main class="stage">
      <svg class="scene" viewBox="0 0 1600 1200" preserveAspectRatio="none" aria-hidden="true">${scene}</svg>
      <section class="editor">
        <div class="service"><rail-icon name="officer"></rail-icon>${this.combo("Dienst", "The Last Run (P)")}</div>
        <div class="map">
          <svg class="tracks" viewBox="175 78 750 1103" preserveAspectRatio="xMinYMin slice">${trackMap}</svg>
          ${this.panel()}
          ${this.gizmos()}
        </div>
      </section>
      <section class="timetable">
        <div class="tools">
          ${TOOLS.map(([icon, label, off]) => html`<button aria-label=${label} class=${off ? "disabled" : ""}><rail-icon name=${icon}></rail-icon></button>`)}
        </div>
        <div class="list">
          <table>
            <colgroup><col class="c1"><col class="c2"><col class="c3"><col class="c4"><col class="c5"><col class="c6"><col></colgroup>
            <thead><tr><th></th><th></th><th>Bestimmungsort</th><th>Ankunftszeit</th><th>Abfahrtszeit</th><th></th><th></th></tr></thead>
            <tbody>${STOPS.map((s) => this.stopRow(s))}</tbody>
          </table>
        </div>
        <div class="footer">
          <button aria-label="Fehler prüfen"><rail-icon name="warning"></rail-icon></button>
          <button class="ok"><span>OK</span></button>
        </div>
      </section>
    </main>`;
  }
}
